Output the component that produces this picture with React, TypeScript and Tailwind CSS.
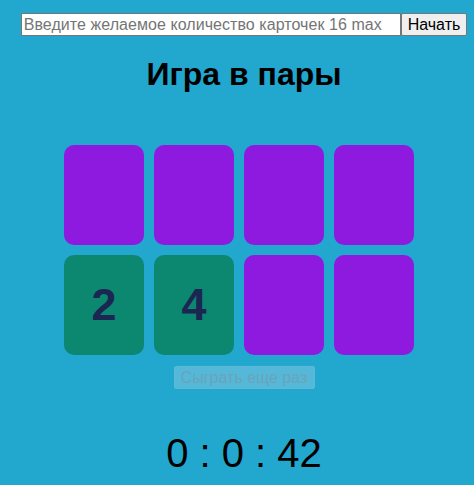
const cards = [
  { open: false, value: 1 },
  { open: false, value: 3 },
  { open: false, value: 2 },
  { open: false, value: 1 },
  { open: true, value: 2 },
  { open: true, value: 4 },
  { open: false, value: 3 },
  { open: false, value: 4 },
];

export default function App() {
  return (
    <div className="min-h-[485px] bg-[#22a7cf] pl-[14px] font-['Liberation_Sans',Arial,sans-serif] text-black">
      {/* Controls */}
      <div className="flex justify-center pt-[13px]">
        <input
          type="text"
          placeholder="Введите желаемое количество карточек 16 max"
          className="h-[23px] w-[380px] border border-[#767676] bg-white px-[2px] text-[16px] tracking-[0.06px] placeholder:text-[#757575]"
        />
        <button className="h-[23px] rounded-[2px] border border-[#767676] bg-[#efefef] px-[6px] text-[16px] leading-none">
          Начать
        </button>
      </div>

      <h1 className="mt-[20px] text-center text-[32px] font-bold leading-[37px]">
        Игра в пары
      </h1>

      {/* Board */}
      <div className="mt-[52px] flex justify-center">
        <div className="grid grid-cols-4 gap-[10px] pr-[10px]">
          {cards.map((card, i) => (
            <div
              key={i}
              className={
                card.open
                  ? "flex h-[100px] w-[80px] items-center justify-center rounded-[10px] bg-[#0d8870] text-[45px] font-bold text-[#1b2752]"
                  : "h-[100px] w-[80px] rounded-[10px] bg-[#8e1ae0]"
              }
            >
              {card.open ? card.value : null}
            </div>
          ))}
        </div>
      </div>

      <div className="mt-[11px] flex justify-center">
        <button
          disabled
          className="h-[23px] w-[141px] rounded-[2px] border border-[#5db9d6] bg-[#55b8d8] text-[16px] leading-none text-[#6aa4b8]"
        >
          Сыграть еще раз
        </button>
      </div>

      <div className="mt-[41px] text-center text-[40px] leading-[46px]">0 : 0 : 42</div>
    </div>
  );
}
